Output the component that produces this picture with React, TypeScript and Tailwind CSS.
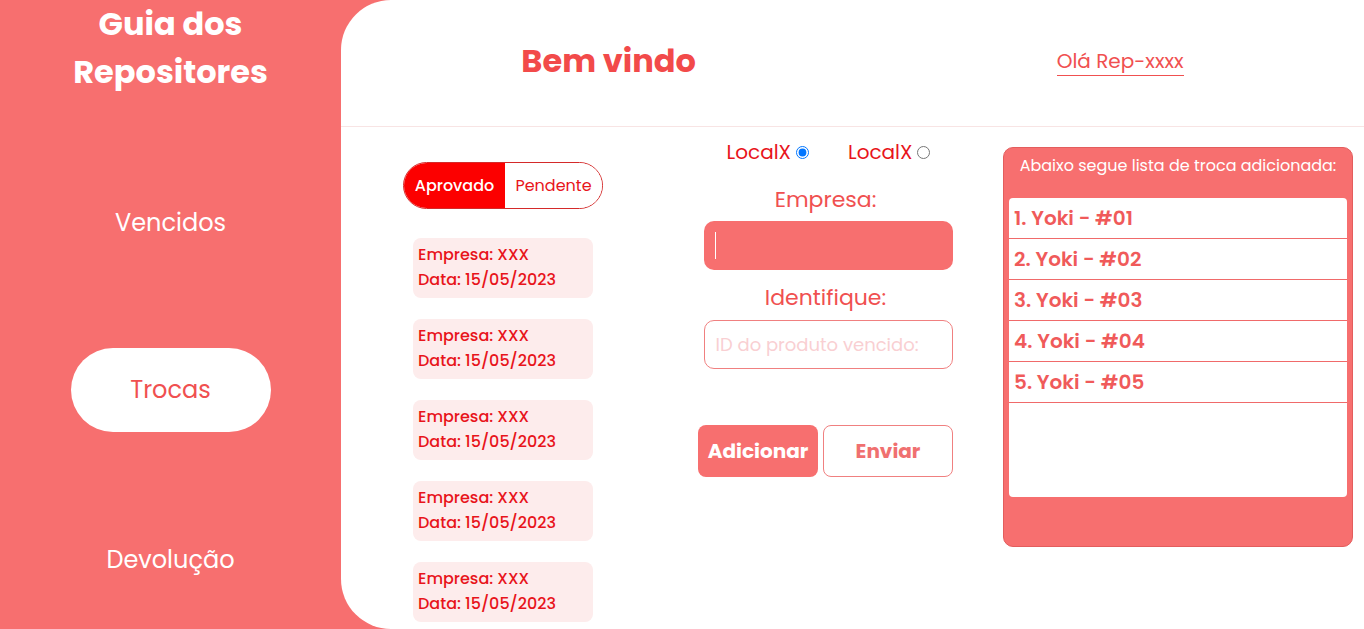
import React from "react";

const font = { fontFamily: "Poppins, Inter, 'Noto Sans', sans-serif" };

function Card() {
  return (
    <div className="w-[180px] h-[60px] ml-[10px] rounded-[8px] bg-[#fdecec] pl-[5px] pt-[4px] text-[16px] font-medium leading-[25px] text-[#e8141b]">
      <div>Empresa: XXX</div>
      <div>Data: 15/05/2023</div>
    </div>
  );
}

export default function App() {
  const items = ["1. Yoki - #01", "2. Yoki - #02", "3. Yoki - #03", "4. Yoki - #04", "5. Yoki - #05"];
  return (
    <div style={font} className="flex h-[629px] w-[1364px] overflow-hidden bg-[#f76f6f]">
      <aside className="flex w-[341px] shrink-0 flex-col items-center text-white">
        <h1 className="text-center text-[32px] font-bold leading-[48px]">
          Guia dos
          <br />
          Repositores
        </h1>
        <nav className="mt-[85px] flex flex-col items-center gap-[84px]">
          <div className="flex h-[84px] w-[200px] items-center justify-center text-[24px]">Vencidos</div>
          <div className="-mt-px flex h-[84px] w-[200px] items-center justify-center rounded-full bg-white text-[24px] text-[#f05050]">Trocas</div>
          <div className="mt-[2px] flex h-[84px] w-[200px] items-center justify-center text-[24px]">Devolução</div>
        </nav>
      </aside>
      <main className="flex flex-1 flex-col rounded-l-[50px] bg-white">
        <header className="flex h-[127px] items-center justify-around border-b border-[#f8e4e4]">
          <div className="mb-[4px] text-[32px] font-bold text-[#f24a4a]">Bem vindo</div>
          <div className="mb-[2px] border-b border-[#f05050] text-[20px] leading-[27px] text-[#f05050]">Olá Rep-xxxx</div>
        </header>
        <section className="flex pl-[62px]">
          <div className="mt-[35px] flex w-[200px] flex-col">
            <div className="flex h-[47px] overflow-hidden rounded-full border border-[#d42a2a]">
              <div className="flex w-[101px] items-center justify-center bg-[#fc0000] text-[16px] font-medium text-white">Aprovado</div>
              <div className="flex flex-1 items-center justify-center bg-white text-[16px] text-[#e8141b]">Pendente</div>
            </div>
            <div className="mt-[29px] flex flex-col gap-[21px]">
              <Card />
              <Card />
              <Card />
              <Card />
              <Card />
            </div>
          </div>
          <div className="ml-[95px] flex w-[255px] flex-col items-center">
            <div className="ml-[6px] mt-[13px] flex h-[24px] items-center gap-[39px] text-[20px] text-[#e8141b]">
              <label className="flex items-center gap-[5px]">
                LocalX
                <input type="radio" name="local" defaultChecked className="m-0 h-[13px] w-[13px]" />
              </label>
              <label className="flex items-center gap-[5px]">
                LocalX
                <input type="radio" name="local" className="m-0 h-[13px] w-[13px]" />
              </label>
            </div>
            <div className="mt-[22px] text-[22px] leading-[28px] text-[#f05050]">Empresa:</div>
            <div className="ml-[5px] mt-[7px] flex h-[49px] w-[249px] items-center rounded-[10px] bg-[#f76f6f] pl-[11px]">
              <span className="h-[27px] w-px bg-white" />
            </div>
            <div className="mt-[14px] text-[22px] leading-[28px] text-[#f05050]">Identifique:</div>
            <div className="ml-[5px] mt-[8px] flex h-[49px] w-[249px] items-center rounded-[10px] border border-[#f08080] pl-[11px] text-[18px] text-[#f9cfd2]">
              ID do produto vencido:
            </div>
            <div className="mt-[56px] flex w-full gap-[5px]">
              <button className="h-[52px] w-[120px] rounded-[8px] bg-[#f76f6f] text-[20px] font-bold text-white">Adicionar</button>
              <button className="h-[52px] w-[130px] rounded-[8px] border border-[#f08080] bg-white text-[20px] font-bold text-[#f07070]">Enviar</button>
            </div>
          </div>
          <div className="ml-[50px] mt-[20px] flex h-[400px] w-[350px] flex-col rounded-[10px] border border-[#e35d5d] bg-[#f76f6f] px-[5px]">
            <div className="pt-[6px] text-center text-[16px] leading-[24px] text-white">Abaixo segue lista de troca adicionada:</div>
            <ul className="mt-[20px] h-[299px] rounded-[4px] bg-white">
              {items.map((t) => (
                <li key={t} className="flex h-[41px] items-center border-b border-[#f06a6a] pl-[5px] text-[20px] font-semibold text-[#f05a5a]">
                  {t}
                </li>
              ))}
            </ul>
          </div>
        </section>
      </main>
    </div>
  );
}
